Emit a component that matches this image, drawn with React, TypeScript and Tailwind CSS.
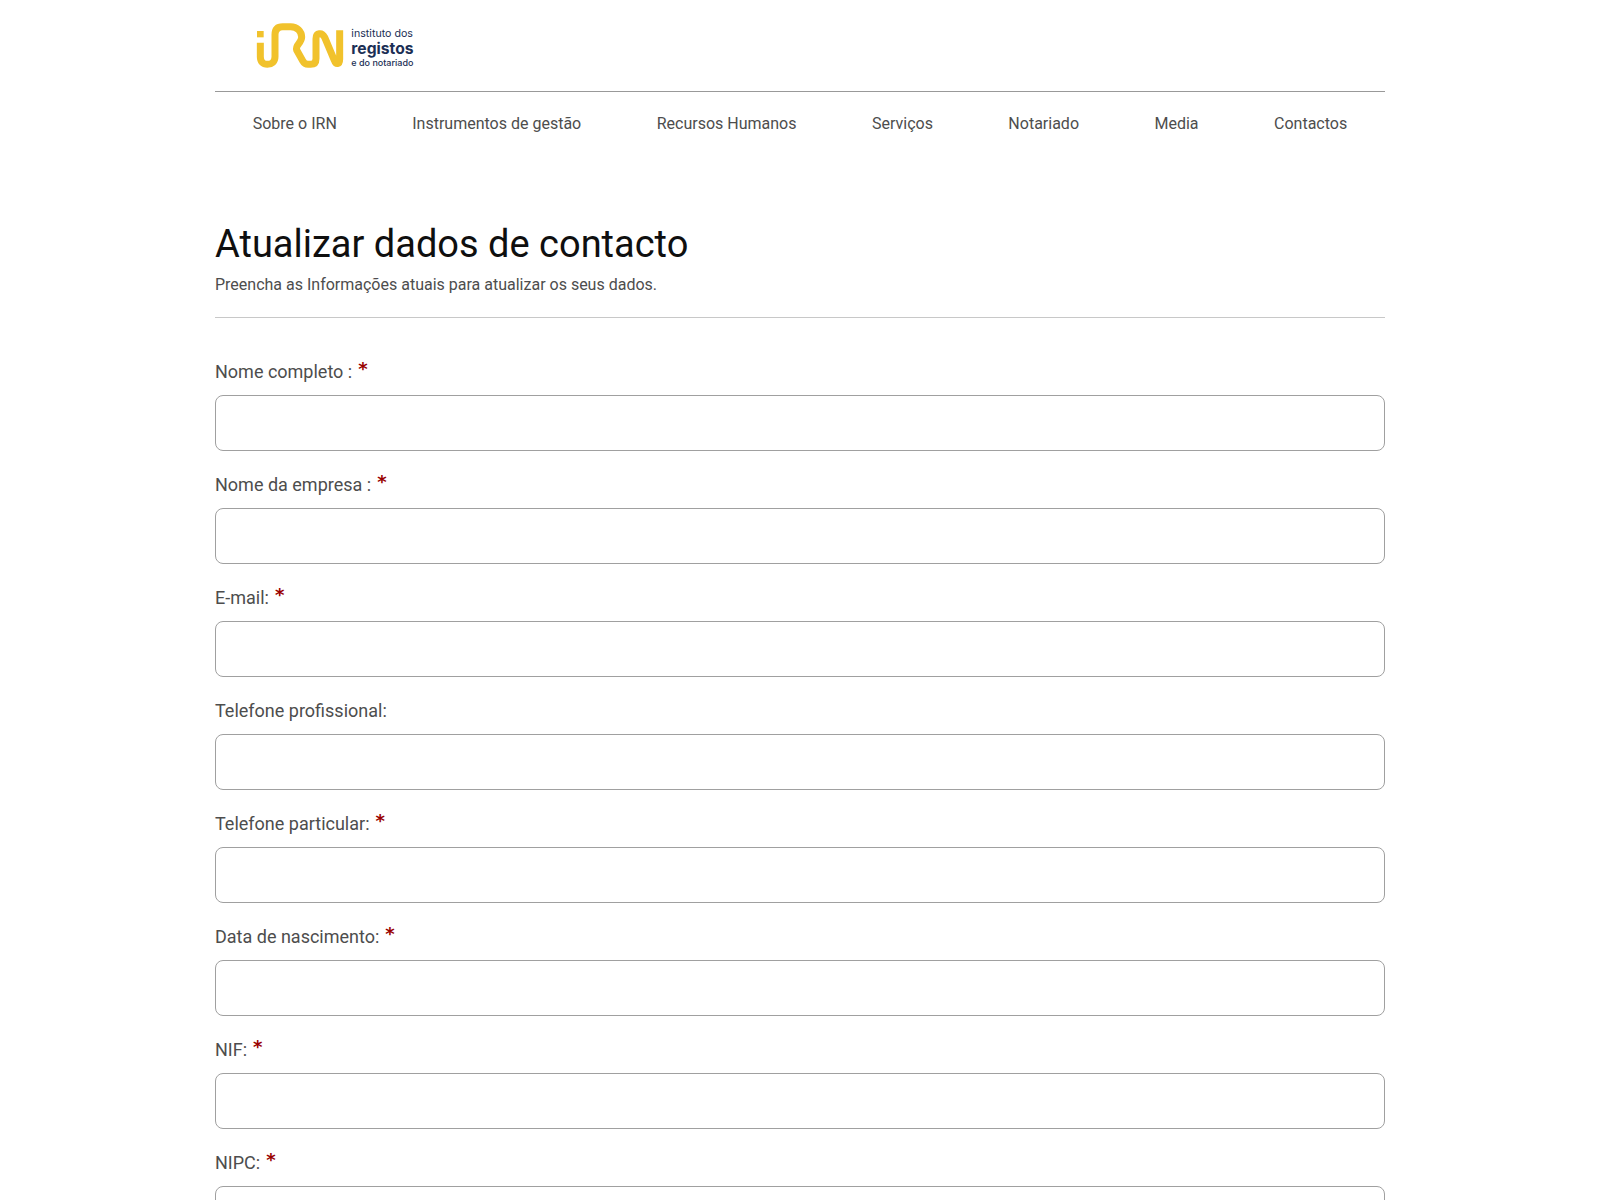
import React from 'react';

interface Field {
  id: string;
  label: string;
  type: string;
  required: boolean;
}

const navItems = [
  'Sobre o IRN',
  'Instrumentos de gestão',
  'Recursos Humanos',
  'Serviços',
  'Notariado',
  'Media',
  'Contactos',
];

const fields: Field[] = [
  { id: 'nome', label: 'Nome completo :', type: 'text', required: true },
  { id: 'empresa', label: 'Nome da empresa :', type: 'text', required: true },
  { id: 'email', label: 'E-mail:', type: 'email', required: true },
  { id: 'telefone-profissional', label: 'Telefone profissional:', type: 'tel', required: false },
  { id: 'telefone-particular', label: 'Telefone particular:', type: 'tel', required: true },
  { id: 'nascimento', label: 'Data de nascimento:', type: 'text', required: true },
  { id: 'nif', label: 'NIF:', type: 'text', required: true },
  { id: 'nipc', label: 'NIPC:', type: 'text', required: true },
];

const Logo: React.FC = () => (
  <svg viewBox="0 0 540 210" className="w-[180px] h-[70px]" role="img" aria-label="IRN">
    <rect x="36" y="63" width="20" height="19" fill="#f1c22c" />
    <path
      d="M46 98V140C46 155 54 163 67 163S90 155 90 140V74C90 58 98 50 113 50H137C156 50 170 64 170 81C170 100 150 104 155 120L173 152C178 161 182 163 189 163H197C208 163 213 157 213 146V86C213 68 231 66 239 82L268 151C273 165 284 164 284 148V61"
      fill="none"
      stroke="#f1c22c"
      strokeWidth="21"
    />
    <g fill="#1b2f55" fontFamily="Inter, sans-serif">
      <text x="319" y="82" fontSize="32">instituto dos</text>
      <text x="319" y="132" fontSize="47" fontWeight="700">registos</text>
      <text x="319" y="167" fontSize="27" fontWeight="500">e do notariado</text>
    </g>
  </svg>
);

const FormField: React.FC<{ field: Field }> = ({ field }) => (
  <div>
    <label htmlFor={field.id} className="flex items-center gap-1.5 h-6 mb-[11px] text-lg leading-6">
      {field.label}
      {field.required && (
        <span className="self-start font-['DejaVu_Sans',sans-serif] font-bold text-lg leading-[18px] text-[#990000]">*</span>
      )}
    </label>
    <input
      id={field.id}
      type={field.type}
      required={field.required}
      className="block w-full h-14 px-4 border border-[#a0a0a0] rounded-lg bg-white text-base shadow-none outline-none focus:border-[#1b2f55]"
    />
  </div>
);

export default function App() {
  return (
    <div className="bg-white font-['Roboto',sans-serif] text-[#4d4d4d]">
      <div className="max-w-[1170px] mx-auto">
        <header>
          <div className="px-[30px] pt-[10px] pb-[11px] border-b border-[#999999]">
            <a href="#" className="inline-block align-top">
              <Logo />
            </a>
          </div>
          <nav className="flex justify-around py-5">
            {navItems.map((item) => (
              <a key={item} href="#" className="text-base leading-6 hover:underline">
                {item}
              </a>
            ))}
          </nav>
        </header>

        <main className="pt-15">
          <div className="pb-5 border-b border-[#c8c8c8]">
            <h1 className="text-[38px] leading-[57px] text-[#0f0f0f]">Atualizar dados de contacto</h1>
            <p className="text-base leading-6">Preencha as Informações atuais para atualizar os seus dados.</p>
          </div>

          <form className="flex flex-col gap-[22px] pt-[42px]">
            {fields.map((field) => (
              <FormField key={field.id} field={field} />
            ))}
          </form>
        </main>
      </div>
    </div>
  );
}
